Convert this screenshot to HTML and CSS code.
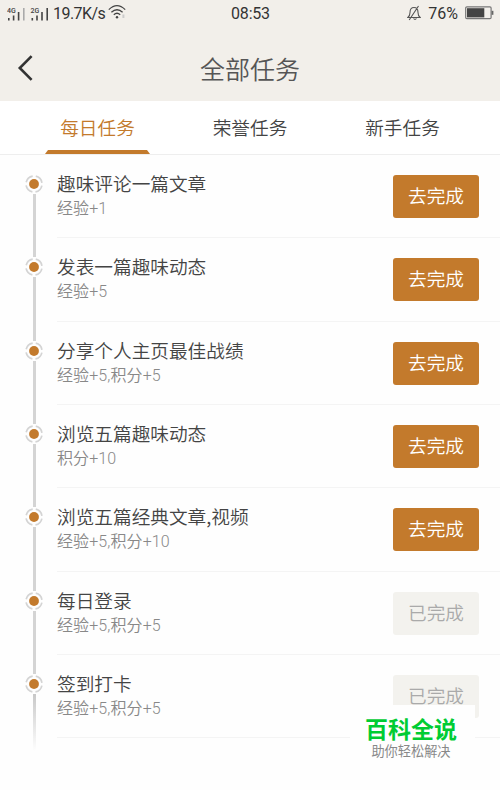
FILE: index.html
```html
<!DOCTYPE html>
<html lang="zh-CN">

<head>
    <meta charset="utf-8">
    <title>全部任务</title>
    <link rel="stylesheet" href="styles.css">
</head>

<body>
    <header class="header">
        <div class="status">
            <div class="status-left">
                <svg class="signals" width="44" height="16" viewBox="0 0 44 16">
                    <g fill="#444">
                        <path d="M1 13h1.6v2.5H1zM5.8 10.5h1.6v5H5.8zM10.8 7h1.6v8.5h-1.6z" />
                        <path fill="#aaa" d="M16 3h1.6v12.5H16z" />
                        <path d="M24.5 13h1.6v2.5h-1.6zM29.2 10.5h1.6v5h-1.6zM34.2 7h1.6v8.5h-1.6zM39.4 3H41v12.5h-1.6z" />
                    </g>
                    <text class="net" x="0" y="7.5">4G</text>
                    <text class="net" x="23.5" y="7.5">2G</text>
                </svg>
                <span class="speed">19.7K/s</span>
                <svg class="wifi" width="18" height="16" viewBox="0 0 18 16">
                    <g fill="none" stroke="#444" stroke-width="1.3">
                        <path d="M.8 5.6Q9-2.4 17.2 5.6M3.4 8.2q5.6-5 11.2 0M5.8 10.7q3.2-2.8 6.4 0" />
                    </g>
                    <circle cx="9" cy="13.3" r="1.2" fill="#444" />
                    <path d="M14.4 10.5h2v3.5h-2z" fill="#ccc" />
                </svg>
            </div>
            <span class="time">08:53</span>
            <div class="status-right">
                <svg width="14" height="16" viewBox="0 0 14 16" fill="none" stroke="#555" stroke-width="1.1">
                    <path d="M.8 12.5Q3 11 3 7.5 3 2.5 7 2.5t4 5q0 3.5 2.2 5zM6.5 13.5q1.5 1.8 3 0M2.2 15L11.5 1" />
                </svg>
                <span class="percent">76%</span>
                <svg width="29" height="14" viewBox="0 0 29 14">
                    <rect x=".7" y=".9" width="25.4" height="11.8" rx="1.2" fill="none" stroke="#777" stroke-width="1.2" />
                    <path d="M2 2.2h17.3v9.2H2z" fill="#444" />
                    <path d="M26.6 4.8h1.8v4h-1.8z" fill="#666" />
                </svg>
            </div>
        </div>
        <div class="navbar">
            <svg class="back" width="16" height="26" viewBox="0 0 16 26">
                <path d="M14.6 1.2L2.8 13l11.8 11.8" fill="none" stroke="#333" stroke-width="2.6" />
            </svg>
            <h1 class="page-title">全部任务</h1>
        </div>
    </header>

    <nav class="tabs">
        <div class="tab active">每日任务</div>
        <div class="tab">荣誉任务</div>
        <div class="tab">新手任务</div>
    </nav>

    <div class="task-list" id="tasks"></div>

    <div class="watermark">
        <div class="watermark-name">百科全说</div>
        <div class="watermark-sub">助你轻松解决</div>
    </div>

    <script src="tasks.js"></script>
</body>

</html>
```

FILE: styles.css
```css
body {
    margin: 0;
    height: 790px;
    overflow: hidden;
    position: relative;
    background-color: #fefefe;
    color: #444;
    font-family: "Noto Sans CJK SC", sans-serif;
    font-weight: 350;
}

.header {
    height: 101px;
    background-color: #f2efea;
}

.status {
    display: flex;
    justify-content: space-between;
    height: 27px;
    padding: 0 6px 0 7px;
    font-family: Roboto, "Liberation Sans", sans-serif;
    font-weight: 400;
    font-size: 16px;
    line-height: 27px;
    color: #333;
}

.status-left,
.status-right {
    display: flex;
    align-items: center;
    width: 180px;
    height: 26px;
}

.status-right {
    justify-content: flex-end;
}

.net {
    font-size: 7px;
    font-weight: 500;
    fill: #444;
}

.speed {
    margin-left: 2px;
    letter-spacing: -0.55px;
}

.wifi {
    margin-left: 3px;
    margin-top: -2px;
}

.time {
    letter-spacing: -0.2px;
}

.percent {
    margin: 0 7px 0 7px;
}

.navbar {
    display: flex;
    align-items: center;
    height: 74px;
    padding: 0 17px;
}

.back {
    margin-top: 8px;
}

.page-title {
    flex: 1;
    margin: 8px 16px 0 0;
    text-align: center;
    font-size: 25px;
    font-weight: 350;
    line-height: 36px;
    color: #555;
}

.tabs {
    display: flex;
    justify-content: center;
    gap: 47.5px;
    height: 53px;
    border-bottom: 1px solid #eee;
    background-color: #fff;
}

.tab {
    width: 105px;
    height: 53px;
    text-align: center;
    font-size: 18.67px;
    line-height: 52px;
}

.tab.active {
    display: flex;
    flex-direction: column;
    color: #c37a2c;
}

.tab.active::after {
    content: "";
    height: 4px;
    margin-top: -3px;
    background-color: #c37a2c;
    clip-path: polygon(3px 0, 102px 0, 100% 100%, 0 100%);
}

.task {
    display: flex;
    height: 83.33px;
}

.timeline {
    display: flex;
    flex-direction: column;
    align-items: center;
    width: 20px;
    margin-left: 24px;
}

.timeline::before,
.timeline::after {
    content: "";
    width: 3px;
    background-color: #d4d4d4;
}

.timeline::before {
    height: 19px;
    flex-shrink: 0;
}

.timeline::after {
    flex: 1;
}

.task:first-child .timeline::before {
    background: none;
}

/* line fades out below the last task */
.task:last-child .timeline::after {
    flex: none;
    height: 57px;
    background: linear-gradient(#c8c8c8, #fefefe);
}

.dot {
    display: block;
    height: 20px;
    flex-shrink: 0;
}

.task-body {
    display: flex;
    flex: 1;
    justify-content: space-between;
    box-sizing: border-box;
    margin-left: 13px;
    padding: 20px 21px 0 0;
    border-bottom: 1px solid #f4f4f4;
}

.task-name {
    margin-top: -6px;
    font-size: 18.67px;
    line-height: 28px;
}

.task-reward {
    margin-top: 1px;
    font-family: Roboto, "Noto Sans CJK SC", sans-serif;
    font-size: 16px;
    line-height: 22px;
    letter-spacing: 0.1px;
    color: #888;
}

.button {
    box-sizing: border-box;
    width: 86px;
    height: 43px;
    padding: 0 0 3px;
    border: none;
    border-radius: 3px;
    font: inherit;
    font-size: 18.67px;
    line-height: 40px;
    color: #fff;
    background-color: #c37a2c;
}

.button.done {
    color: #aaa;
    background-color: #f3f2ee;
}

/* floats over the bottom of the list */
.watermark {
    position: absolute;
    left: 350px;
    top: 705px;
    width: 125px;
    height: 60px;
    box-sizing: border-box;
    padding-top: 12px;
    text-align: center;
    background-color: #fefefe;
    font-weight: 400;
}

.watermark-name {
    margin-right: 3px;
    font-size: 23px;
    font-weight: 700;
    line-height: 23px;
    color: #00cc33;
}

.watermark-sub {
    margin-right: 3px;
    margin-top: 1px;
    font-size: 13.2px;
    line-height: 20px;
    color: #888;
}
```

FILE: tasks.js
```javascript
var tarefas = [
    { name: "趣味评论一篇文章", reward: "经验+1", done: false },
    { name: "发表一篇趣味动态", reward: "经验+5", done: false },
    { name: "分享个人主页最佳战绩", reward: "经验+5,积分+5", done: false },
    { name: "浏览五篇趣味动态", reward: "积分+10", done: false },
    { name: "浏览五篇经典文章,视频", reward: "经验+5,积分+10", done: false },
    { name: "每日登录", reward: "经验+5,积分+5", done: true },
    { name: "签到打卡", reward: "经验+5,积分+5", done: true }
];

var dot = '<svg class="dot" width="20" height="20" viewBox="0 0 20 20">' +
    '<circle cx="10" cy="10" r="8" fill="none" stroke="#d4d4d4" stroke-width="1.7" stroke-dasharray="9.4 3.166" stroke-dashoffset="-1.583" />' +
    '<circle cx="10" cy="10" r="4.9" fill="#c37a2c" /></svg>';

var html = "";
for (var i = 0; i < tarefas.length; i++) {
    var t = tarefas[i];
    var button = t.done
        ? '<button class="button done">已完成</button>'
        : '<button class="button">去完成</button>';
    html += '<div class="task"><div class="timeline">' + dot + '</div>' +
        '<div class="task-body"><div><div class="task-name">' + t.name + '</div>' +
        '<div class="task-reward">' + t.reward + '</div></div>' + button + '</div></div>';
}
document.getElementById("tasks").innerHTML = html;
```
